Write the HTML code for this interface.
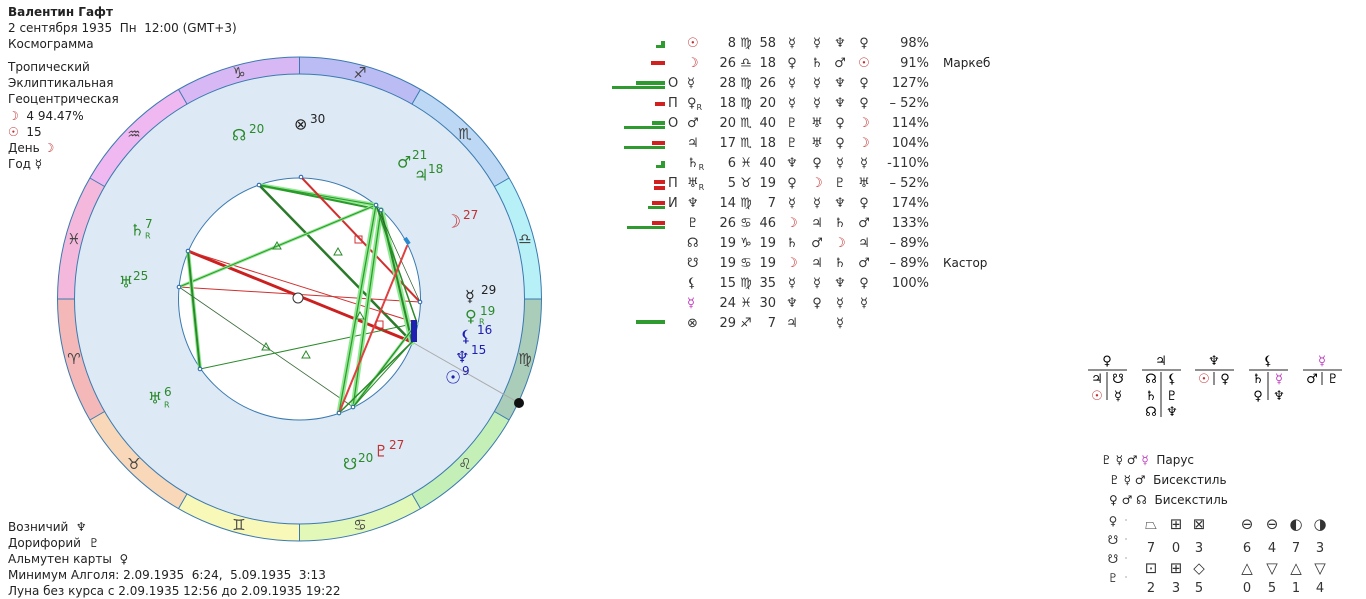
<!DOCTYPE html>
<html><head><meta charset="utf-8">
<style>
html,body{margin:0;width:1366px;height:599px;background:#fff;position:relative;overflow:hidden;font-family:"DejaVu Sans","Liberation Sans",sans-serif;font-size:12px;color:#222}
.t{position:absolute;white-space:pre;line-height:16px}
.r{color:#c03030}
.g{color:#3a8a3a}
.m{color:#c040c0}
.tb{position:absolute;font-family:"DejaVu Sans","Liberation Sans",sans-serif;font-size:13px;color:#333;white-space:pre;line-height:20px}
.bar{position:absolute;height:4px}
.gr{background:#2f9a2f}.rd{background:#d02020}
.sr{font-size:8px;position:relative;top:3px;line-height:0}
</style></head><body>
<div class="t" style="left:8px;top:4px;font-weight:bold">Валентин Гафт</div>
<div class="t" style="left:8px;top:20px">2 сентября 1935  Пн  12:00 (GMT+3)</div>
<div class="t" style="left:8px;top:36px">Космограмма</div>
<div class="t" style="left:8px;top:59px">Тропический</div>
<div class="t" style="left:8px;top:75px">Эклиптикальная</div>
<div class="t" style="left:8px;top:91px">Геоцентрическая</div>
<div class="t" style="left:8px;top:108px"><span class="r">☽</span>  4 94.47%</div>
<div class="t" style="left:8px;top:124px"><span class="r">☉</span>  15</div>
<div class="t" style="left:8px;top:140px">День <span class="r">☽</span></div>
<div class="t" style="left:8px;top:156px">Год ☿</div>

<div class="t" style="left:8px;top:519px">Возничий  ♆</div>
<div class="t" style="left:8px;top:535px">Дорифорий  ♇</div>
<div class="t" style="left:8px;top:551px">Альмутен карты  ♀</div>
<div class="t" style="left:8px;top:567px">Минимум Алголя: 2.09.1935  6:24,  5.09.1935  3:13</div>
<div class="t" style="left:8px;top:583px">Луна без курса с 2.09.1935 12:56 до 2.09.1935 19:22</div>

<svg style="position:absolute;left:0;top:0" width="560" height="560">
<g fill="none" stroke-width="17">
<circle cx="299.5" cy="299" r="233.5" stroke="#a9cdb9" stroke-dasharray="122.26 1500" stroke-dashoffset="0"/>
<circle cx="299.5" cy="299" r="233.5" stroke="#c4f0b8" stroke-dasharray="122.26 1500" stroke-dashoffset="-122.26"/>
<circle cx="299.5" cy="299" r="233.5" stroke="#e2f8b8" stroke-dasharray="122.26 1500" stroke-dashoffset="-244.52"/>
<circle cx="299.5" cy="299" r="233.5" stroke="#f8f8b8" stroke-dasharray="122.26 1500" stroke-dashoffset="-366.78"/>
<circle cx="299.5" cy="299" r="233.5" stroke="#f8d8b8" stroke-dasharray="122.26 1500" stroke-dashoffset="-489.04"/>
<circle cx="299.5" cy="299" r="233.5" stroke="#f4b8b8" stroke-dasharray="122.26 1500" stroke-dashoffset="-611.3"/>
<circle cx="299.5" cy="299" r="233.5" stroke="#f4b8dc" stroke-dasharray="122.26 1500" stroke-dashoffset="-733.56"/>
<circle cx="299.5" cy="299" r="233.5" stroke="#f0b8f0" stroke-dasharray="122.26 1500" stroke-dashoffset="-855.82"/>
<circle cx="299.5" cy="299" r="233.5" stroke="#d8b8f4" stroke-dasharray="122.26 1500" stroke-dashoffset="-978.08"/>
<circle cx="299.5" cy="299" r="233.5" stroke="#bcbcf4" stroke-dasharray="122.26 1500" stroke-dashoffset="-1100.34"/>
<circle cx="299.5" cy="299" r="233.5" stroke="#bcd8f4" stroke-dasharray="122.26 1500" stroke-dashoffset="-1222.6"/>
<circle cx="299.5" cy="299" r="233.5" stroke="#b8f0f8" stroke-dasharray="122.26 1500" stroke-dashoffset="-1344.86"/>
</g>
<circle cx="299.5" cy="299" r="242" fill="none" stroke="#3a7ab0" stroke-width="1"/>
<circle cx="299.5" cy="299" r="225" fill="#dde9f5" stroke="#3a7ab0" stroke-width="1"/>
<g stroke="#3a7ab0" stroke-width="1">
<line x1="524.5" y1="299" x2="541.5" y2="299"/><line x1="494.4" y1="411.5" x2="509.1" y2="420"/>
<line x1="412" y1="493.9" x2="420.5" y2="508.6"/><line x1="299.5" y1="524" x2="299.5" y2="541"/>
<line x1="187" y1="493.9" x2="178.5" y2="508.6"/><line x1="104.6" y1="411.5" x2="89.9" y2="420"/>
<line x1="74.5" y1="299" x2="57.5" y2="299"/><line x1="104.6" y1="186.5" x2="89.9" y2="178"/>
<line x1="187" y1="104.1" x2="178.5" y2="89.4"/><line x1="299.5" y1="74" x2="299.5" y2="57"/>
<line x1="412" y1="104.1" x2="420.5" y2="89.4"/><line x1="494.4" y1="186.5" x2="509.1" y2="178"/>
</g>
<g font-family="DejaVu Sans" font-size="15" fill="#444" text-anchor="middle" dominant-baseline="central">
<text x="525" y="359">♍</text><text x="465" y="464">♌</text><text x="360" y="525">♋</text>
<text x="239" y="525">♊</text><text x="134" y="464">♉</text><text x="74" y="359">♈</text>
<text x="74" y="239">♓</text><text x="134" y="134">♒</text><text x="239" y="73">♑</text>
<text x="360" y="73">♐</text><text x="465" y="134">♏</text><text x="525" y="239">♎</text>
</g>
<line x1="412" y1="342" x2="519" y2="403" stroke="#aaa" stroke-width="1"/>
<circle cx="519" cy="403" r="5" fill="#111"/>
<circle cx="299.5" cy="299" r="121" fill="#fff" stroke="#3a7ab0" stroke-width="1"/>
<g fill="none" stroke-linecap="round">
<line x1="259" y1="185" x2="376" y2="205" stroke="#90e890" stroke-width="4"/>
<line x1="259" y1="185" x2="376" y2="205" stroke="#2a9a2a" stroke-width="1"/>
<line x1="259" y1="185" x2="381" y2="210" stroke="#2a9a2a" stroke-width="2"/>
<line x1="259" y1="185" x2="412" y2="342" stroke="#2a7a2a" stroke-width="2.5"/>
<line x1="301" y1="177" x2="420" y2="302" stroke="#d03030" stroke-width="2"/>
<line x1="188" y1="251" x2="412" y2="342" stroke="#cc2020" stroke-width="3"/>
<line x1="188" y1="251" x2="417" y2="323" stroke="#d03030" stroke-width="1"/>
<line x1="179" y1="287" x2="420" y2="302" stroke="#d03030" stroke-width="1"/>
<line x1="179" y1="287" x2="376" y2="205" stroke="#90e890" stroke-width="3"/>
<line x1="179" y1="287" x2="376" y2="205" stroke="#2a9a2a" stroke-width="1"/>
<line x1="188" y1="251" x2="200" y2="369" stroke="#90e890" stroke-width="4"/>
<line x1="188" y1="251" x2="200" y2="369" stroke="#2a8a2a" stroke-width="2"/>
<line x1="179" y1="287" x2="353" y2="407" stroke="#3a6a3a" stroke-width="0.8"/>
<line x1="200" y1="369" x2="417" y2="323" stroke="#2a8a2a" stroke-width="1"/>
<line x1="376" y1="205" x2="339" y2="413" stroke="#90e890" stroke-width="5"/>
<line x1="376" y1="205" x2="339" y2="413" stroke="#2a9a2a" stroke-width="1.2"/>
<line x1="381" y1="210" x2="353" y2="407" stroke="#90e890" stroke-width="5"/>
<line x1="381" y1="210" x2="353" y2="407" stroke="#2a9a2a" stroke-width="1.2"/>
<line x1="381" y1="210" x2="412" y2="342" stroke="#90e890" stroke-width="6"/>
<line x1="381" y1="210" x2="412" y2="342" stroke="#2a8a2a" stroke-width="2"/>
<line x1="376" y1="205" x2="417" y2="323" stroke="#2a8a2a" stroke-width="1.5"/>
<line x1="376" y1="205" x2="420" y2="302" stroke="#2a5a2a" stroke-width="0.7"/>
<line x1="407" y1="246" x2="339" y2="413" stroke="#e04040" stroke-width="2"/>
<line x1="353" y1="407" x2="417" y2="323" stroke="#90e890" stroke-width="3"/>
<line x1="353" y1="407" x2="417" y2="323" stroke="#2a8a2a" stroke-width="1.2"/>
<line x1="339" y1="413" x2="412" y2="342" stroke="#2a8a2a" stroke-width="1.5"/>
<line x1="353" y1="407" x2="412" y2="342" stroke="#2a8a2a" stroke-width="1"/>
</g>
<g fill="none" stroke="#2a8a2a" stroke-width="1">
<path d="M277 242l-4 7h8z"/><path d="M338 248l-4 7h8z"/><path d="M266 343l-4 7h8z"/><path d="M306 351l-4 7h8z"/><path d="M360 312l-4 7h8z"/>
</g>
<rect x="355" y="236" width="7" height="7" fill="none" stroke="#d03030"/>
<rect x="376" y="321" width="7" height="7" fill="none" stroke="#d03030"/>
<circle cx="298" cy="298" r="5" fill="#fff" stroke="#333"/>
<g fill="#fff" stroke="#2060b0" stroke-width="1">
<circle cx="259" cy="185" r="1.8"/><circle cx="301" cy="177" r="1.8"/><circle cx="376" cy="205" r="1.8"/><circle cx="381" cy="210" r="1.8"/>
<circle cx="420" cy="302" r="1.8"/><circle cx="353" cy="407" r="1.8"/><circle cx="339" cy="413" r="1.8"/><circle cx="200" cy="369" r="1.8"/>
<circle cx="188" cy="251" r="1.8"/><circle cx="179" cy="287" r="1.8"/>
</g>
<line x1="405" y1="238" x2="409" y2="244" stroke="#2a8ad0" stroke-width="4"/>
<rect x="411" y="320" width="6" height="22" fill="#2020b0"/>
<g font-family="DejaVu Sans" font-size="16" dominant-baseline="central">
<text x="294" y="124" fill="#222">⊗</text><text x="310" y="119" font-size="12" fill="#222">30</text>
<text x="232" y="135" fill="#2a8a2a">☊</text><text x="249" y="129" font-size="12" fill="#2a8a2a">20</text>
<text x="397" y="162" fill="#2a8a2a">♂</text><text x="412" y="155" font-size="12" fill="#2a8a2a">21</text>
<text x="414" y="175" fill="#2a8a2a">♃</text><text x="428" y="169" font-size="12" fill="#2a8a2a">18</text>
<text x="445" y="222" fill="#c03030" font-size="18">☽</text><text x="463" y="215" font-size="12" fill="#c03030">27</text>
<text x="130" y="230" fill="#2a8a2a">♄</text><text x="145" y="224" font-size="12" fill="#2a8a2a">7</text><text x="145" y="236" font-size="8" fill="#2a8a2a">R</text>
<text x="119" y="282" fill="#2a8a2a">♅</text><text x="133" y="276" font-size="12" fill="#2a8a2a">25</text>
<text x="465" y="296" fill="#222">☿</text><text x="481" y="290" font-size="12" fill="#222">29</text>
<text x="465" y="316" fill="#2a8a2a">♀</text><text x="480" y="311" font-size="12" fill="#2a8a2a">19</text><text x="479" y="322" font-size="8" fill="#2a8a2a">R</text>
<text x="460" y="336" fill="#2020b0">⚸</text><text x="477" y="330" font-size="12" fill="#2020b0">16</text>
<text x="455" y="357" fill="#2020b0">♆</text><text x="471" y="350" font-size="12" fill="#2020b0">15</text>
<text x="445" y="378" fill="#2020b0" font-size="18">☉</text><text x="462" y="371" font-size="12" fill="#2020b0">9</text>
<text x="148" y="398" fill="#2a8a2a">♅</text><text x="164" y="392" font-size="12" fill="#2a8a2a">6</text><text x="164" y="405" font-size="8" fill="#2a8a2a">R</text>
<text x="374" y="451" fill="#c03030">♇</text><text x="389" y="445" font-size="12" fill="#c03030">27</text>
<text x="343" y="464" fill="#2a8a2a">☋</text><text x="358" y="458" font-size="12" fill="#2a8a2a">20</text>
</g>
</svg>

<div class="bar gr" style="left:656px;top:45px;width:9px;height:3px"></div><div class="bar gr" style="left:661px;top:41px;width:4px;height:4px"></div>
<div class="bar rd" style="left:651px;top:61px;width:14px"></div>
<div class="bar gr" style="left:612px;top:86px;width:53px;height:3px"></div><div class="bar gr" style="left:636px;top:81px;width:29px"></div>
<div class="bar rd" style="left:655px;top:102px;width:10px"></div>
<div class="bar gr" style="left:624px;top:126px;width:41px;height:3px"></div><div class="bar gr" style="left:652px;top:121px;width:13px"></div>
<div class="bar gr" style="left:624px;top:146px;width:41px;height:3px"></div><div class="bar rd" style="left:652px;top:141px;width:13px"></div>
<div class="bar gr" style="left:656px;top:165px;width:9px;height:3px"></div><div class="bar gr" style="left:661px;top:161px;width:4px;height:4px"></div>
<div class="bar rd" style="left:654px;top:180px;width:11px"></div><div class="bar rd" style="left:654px;top:186px;width:11px"></div>
<div class="bar gr" style="left:648px;top:206px;width:17px;height:3px"></div><div class="bar rd" style="left:652px;top:201px;width:13px"></div>
<div class="bar gr" style="left:627px;top:226px;width:38px;height:3px"></div><div class="bar rd" style="left:652px;top:221px;width:13px"></div>
<div class="bar gr" style="left:636px;top:320px;width:29px"></div>

<div class="tb" style="left:668px;top:74px">O</div>
<div class="tb" style="left:668px;top:94px">П</div>
<div class="tb" style="left:668px;top:114px">O</div>
<div class="tb" style="left:668px;top:174px">П</div>
<div class="tb" style="left:668px;top:194px">И</div>

<div class="tb" style="left:687px;top:34px"><span class="r">☉</span></div>
<div class="tb" style="left:687px;top:54px"><span class="r">☽</span></div>
<div class="tb" style="left:687px;top:74px">☿</div>
<div class="tb" style="left:687px;top:94px">♀<span class="sr">R</span></div>
<div class="tb" style="left:687px;top:114px">♂</div>
<div class="tb" style="left:687px;top:134px">♃</div>
<div class="tb" style="left:687px;top:154px">♄<span class="sr">R</span></div>
<div class="tb" style="left:687px;top:174px">♅<span class="sr">R</span></div>
<div class="tb" style="left:687px;top:194px">♆</div>
<div class="tb" style="left:687px;top:214px">♇</div>
<div class="tb" style="left:687px;top:234px">☊</div>
<div class="tb" style="left:687px;top:254px">☋</div>
<div class="tb" style="left:687px;top:274px">⚸</div>
<div class="tb" style="left:687px;top:294px"><span class="m">☿</span></div>
<div class="tb" style="left:687px;top:314px">⊗</div>
<div class="tb" style="left:710px;top:34px;width:26px;text-align:right">8<br>26<br>28<br>18<br>20<br>17<br>6<br>5<br>14<br>26<br>19<br>19<br>15<br>24<br>29</div>
<div class="tb" style="left:738px;top:34px;width:16px;text-align:center">♍<br>♎<br>♍<br>♍<br>♏<br>♏<br>♓<br>♉<br>♍<br>♋<br>♑<br>♋<br>♍<br>♓<br>♐</div>
<div class="tb" style="left:754px;top:34px;width:22px;text-align:right">58<br>18<br>26<br>20<br>40<br>18<br>40<br>19<br>7<br>46<br>19<br>19<br>35<br>30<br>7</div>
<div class="tb" style="left:784px;top:34px;width:16px;text-align:center">☿<br>♀<br>☿<br>☿<br>♇<br>♇<br>♆<br>♀<br>☿<br><span class="r">☽</span><br>♄<br><span class="r">☽</span><br>☿<br>♆<br>♃</div>
<div class="tb" style="left:809px;top:34px;width:16px;text-align:center">☿<br>♄<br>☿<br>☿<br>♅<br>♅<br>♀<br><span class="r">☽</span><br>☿<br>♃<br>♂<br>♃<br>☿<br>♀<br> </div>
<div class="tb" style="left:832px;top:34px;width:16px;text-align:center">♆<br>♂<br>♆<br>♆<br>♀<br>♀<br>☿<br>♇<br>♆<br>♄<br><span class="r">☽</span><br>♄<br>♆<br>☿<br>☿</div>
<div class="tb" style="left:856px;top:34px;width:16px;text-align:center">♀<br><span class="r">☉</span><br>♀<br>♀<br><span class="r">☽</span><br><span class="r">☽</span><br>☿<br>♅<br>♀<br>♂<br>♃<br>♂<br>♀<br>☿<br> </div>
<div class="tb" style="left:870px;top:34px;width:59px;text-align:right">98%<br>91%<br>127%<br>– 52%<br>114%<br>104%<br>-110%<br>– 52%<br>174%<br>133%<br>– 89%<br>– 89%<br>100%</div>
<div class="t" style="left:943px;top:55px">Маркеб</div>
<div class="t" style="left:943px;top:255px">Кастор</div>

<svg style="position:absolute;left:1085px;top:350px" width="260" height="70" font-family="DejaVu Sans" font-size="13" text-anchor="middle">
<g stroke="#222" stroke-width="1">
<line x1="3" y1="20" x2="42" y2="20"/><line x1="22" y1="22" x2="22" y2="50"/>
<line x1="57" y1="20" x2="96" y2="20"/><line x1="76" y1="22" x2="76" y2="67"/>
<line x1="110" y1="20" x2="149" y2="20"/><line x1="129" y1="22" x2="129" y2="35"/>
<line x1="164" y1="20" x2="203" y2="20"/><line x1="183" y1="22" x2="183" y2="50"/>
<line x1="218" y1="20" x2="257" y2="20"/><line x1="237" y1="22" x2="237" y2="35"/>
</g>
<text x="22" y="15">♀</text><text x="76" y="15">♃</text><text x="129" y="15">♆</text><text x="183" y="15">⚸</text><text x="237" y="15" fill="#c040c0">☿</text>
<text x="12" y="33">♃</text><text x="33" y="33">☋</text><text x="12" y="50" fill="#c03030">☉</text><text x="33" y="50">☿</text>
<text x="66" y="33">☊</text><text x="87" y="33">⚸</text><text x="66" y="50">♄</text><text x="87" y="50">♇</text><text x="66" y="66">☊</text><text x="87" y="66">♆</text>
<text x="119" y="33" fill="#c03030">☉</text><text x="140" y="33">♀</text>
<text x="173" y="33">♄</text><text x="194" y="33" fill="#c040c0">☿</text><text x="173" y="50">♀</text><text x="194" y="50">♆</text>
<text x="227" y="33">♂</text><text x="248" y="33">♇</text>
</svg>
<div class="t" style="left:1101px;top:452px">♇ ☿ ♂ <span class="m">☿</span>  Парус</div>
<div class="t" style="left:1109px;top:472px">♇ ☿ ♂  Бисекстиль</div>
<div class="t" style="left:1109px;top:492px">♀ ♂ ☊  Бисекстиль</div>
<svg style="position:absolute;left:1100px;top:510px" width="266" height="89" font-family="DejaVu Sans" font-size="14" text-anchor="middle" fill="#333">
<text x="13" y="15" font-size="12">♀</text><text x="13" y="34" font-size="12">☋</text><text x="13" y="53" font-size="12">☋</text><text x="13" y="72" font-size="12">♇</text>
<text x="26" y="13" font-size="8">·</text><text x="26" y="32" font-size="8">·</text><text x="26" y="51" font-size="8">·</text><text x="26" y="70" font-size="8">·</text>
<g font-size="15"><text x="51" y="19">⏢</text><text x="76" y="19">⊞</text><text x="99" y="19">⊠</text>
<text x="147" y="19">⊖</text><text x="172" y="19">⊖</text><text x="196" y="19">◐</text><text x="220" y="19">◑</text>
<text x="51" y="63">⊡</text><text x="76" y="63">⊞</text><text x="99" y="63">◇</text>
<text x="147" y="63">△</text><text x="172" y="63">▽</text><text x="196" y="63">△</text><text x="220" y="63">▽</text></g>
<g font-size="13"><text x="51" y="42">7</text><text x="76" y="42">0</text><text x="99" y="42">3</text>
<text x="147" y="42">6</text><text x="172" y="42">4</text><text x="196" y="42">7</text><text x="220" y="42">3</text>
<text x="51" y="82">2</text><text x="76" y="82">3</text><text x="99" y="82">5</text>
<text x="147" y="82">0</text><text x="172" y="82">5</text><text x="196" y="82">1</text><text x="220" y="82">4</text></g>
</svg>
</body></html>
